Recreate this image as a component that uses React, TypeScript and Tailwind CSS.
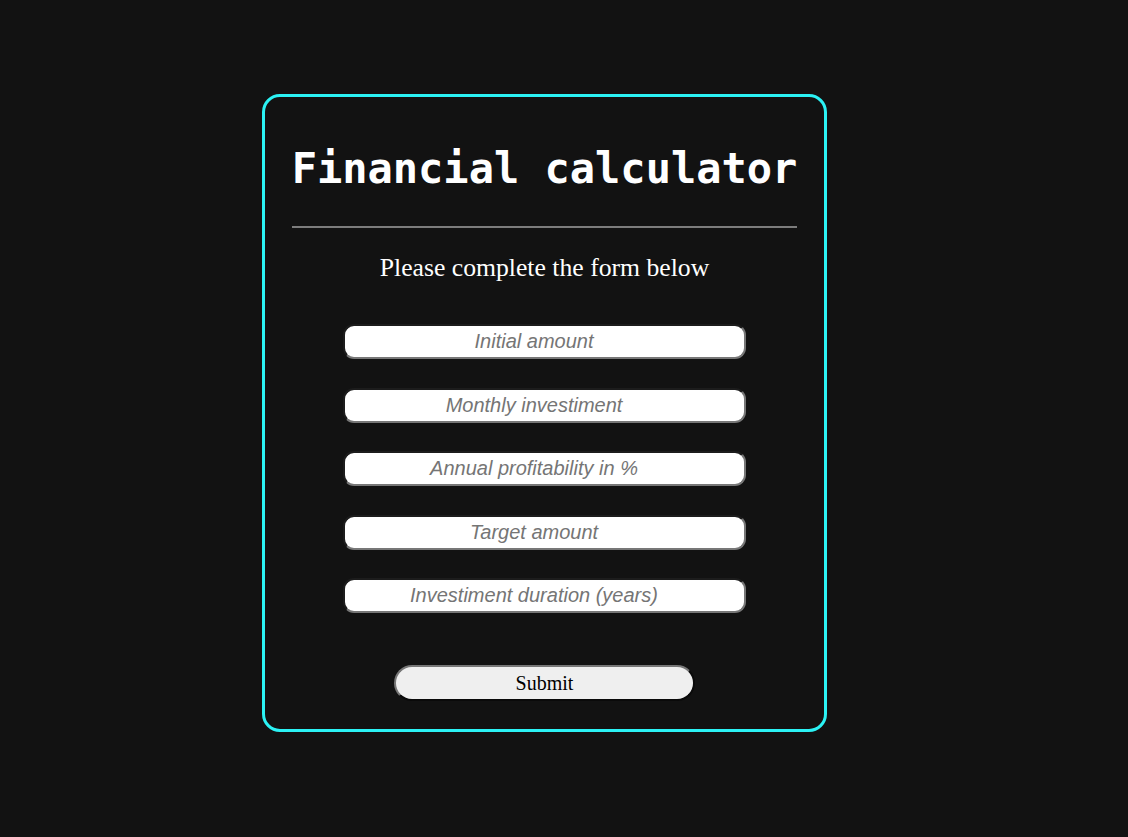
import React from "react";

const fields = [
  "Initial amount",
  "Monthly investiment",
  "Annual profitability in %",
  "Target amount",
  "Investiment duration (years)",
];

export default function App() {
  return (
    <div className="min-h-[837px] w-full bg-[#121212] flex justify-center pr-[39px]">
      <div className="mt-[94px] mb-[105px] w-[565px] h-[638px] box-border border-[3px] border-[#2bf2f4] rounded-[18px] px-[27px] flex flex-col items-center">
        <h1
          className="mt-[51px] text-[42px] leading-[42px] font-bold text-white whitespace-nowrap"
          style={{ fontFamily: '"DejaVu Sans Mono", "Liberation Mono", monospace' }}
        >
          Financial calculator
        </h1>
        <div className="mt-[36px] w-full border-t-2 border-[#7c7c7c]" />
        <p
          className="mt-[26px] text-[25.7px] leading-[28px] text-white whitespace-nowrap"
          style={{ fontFamily: '"Liberation Serif", "Times New Roman", serif' }}
        >
          Please complete the form below
        </p>
        <div className="mt-[42px] flex flex-col gap-[28.5px]">
          {fields.map((f) => (
            <input
              key={f}
              type="text"
              placeholder={f}
              className="w-[403px] h-[35px] box-border bg-white rounded-[11px] border-2 border-t-[#1c1c1c] border-l-[#1c1c1c] border-b-[#777777] border-r-[#777777] pr-[21px] text-center italic text-[20px] text-black placeholder:text-[#757575] outline-none"
              style={{ fontFamily: '"Liberation Sans", Arial, sans-serif' }}
            />
          ))}
        </div>
        <button
          type="button"
          className="mt-[52px] w-[301px] h-[36px] box-border bg-[#efefef] rounded-full border-2 border-t-[#777777] border-l-[#777777] border-b-[#0a0a0a] border-r-[#0a0a0a] text-[20px] text-black"
          style={{ fontFamily: '"Liberation Serif", "Times New Roman", serif' }}
        >
          Submit
        </button>
      </div>
    </div>
  );
}
